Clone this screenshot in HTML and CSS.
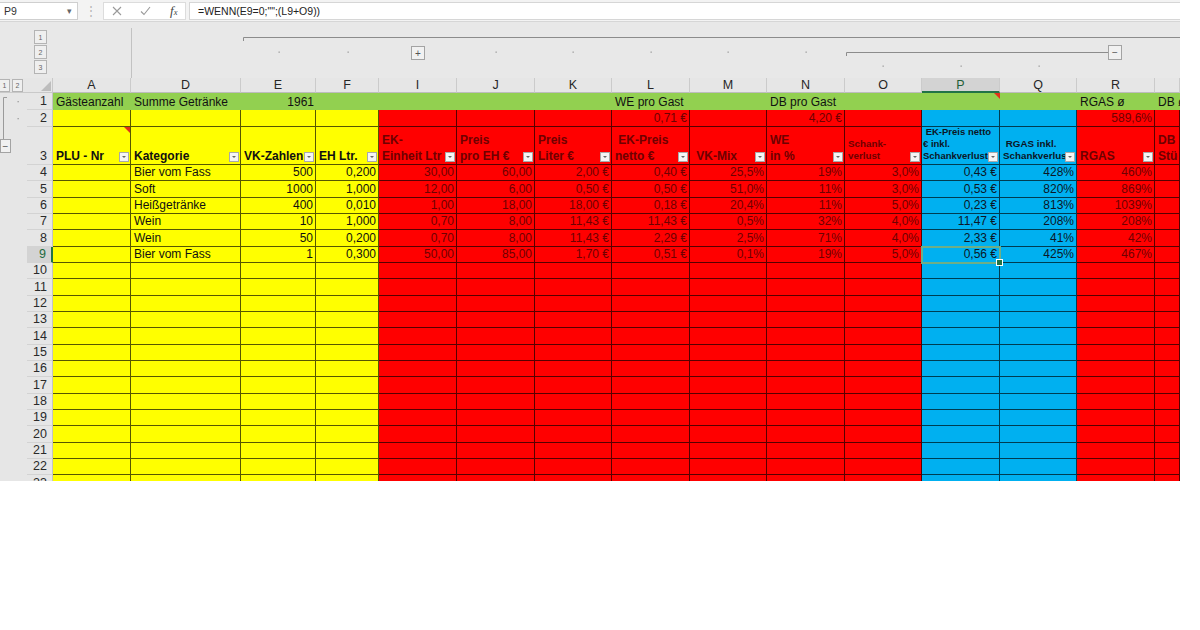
FILE: index.html
```html
<!DOCTYPE html>
<html lang="de">
<head>
<meta charset="utf-8">
<title>Getränkekalkulation</title>
<link rel="stylesheet" href="styles.css">
</head>
<body>
<div class="app">
  <div class="fbar">
    <div class="namebox"><span>P9</span><span class="nb-arrow">▾</span></div>
    <div class="fb-grip">⋮</div>
    <div class="fb-btns">
      <svg class="ic" width="10" height="10" viewBox="0 0 10 10"><path d="M1 1L9 9M9 1L1 9" stroke="#9a9a9a" stroke-width="1.1" fill="none"/></svg>
      <svg class="ic" width="11" height="10" viewBox="0 0 11 10"><path d="M1 5.5L4 8.5L10 1" stroke="#9a9a9a" stroke-width="1.1" fill="none"/></svg>
      <span class="fx"><i>f</i><i class="fx-x">x</i></span>
    </div>
    <div class="fb-input">=WENN(E9=0;"";(L9+O9))</div>
  </div>

  <div class="outline">
    <div class="levels">
      <span class="lvl">1</span><span class="lvl">2</span><span class="lvl">3</span>
    </div>
    <svg class="groups" width="1049" height="56" viewBox="0 0 1049 56">
      <line x1="0.5" y1="6" x2="0.5" y2="56" stroke="#c2c2c2"/>
      <path d="M112.5 19V15.5H1049" fill="none" stroke="#8c8c8c"/>
      <g fill="#9c9c9c">
        <rect x="147.5" y="29.5" width="1.3" height="1.3"/>
        <rect x="216.5" y="29.5" width="1.3" height="1.3"/>
        <rect x="364.5" y="29.5" width="1.3" height="1.3"/>
        <rect x="441.5" y="29.5" width="1.3" height="1.3"/>
        <rect x="519.5" y="29.5" width="1.3" height="1.3"/>
        <rect x="596.5" y="29.5" width="1.3" height="1.3"/>
        <rect x="674.5" y="29.5" width="1.3" height="1.3"/>
        <rect x="751.5" y="43.5" width="1.3" height="1.3"/>
        <rect x="829.5" y="43.5" width="1.3" height="1.3"/>
        <rect x="907.5" y="43.5" width="1.3" height="1.3"/>
      </g>
      <rect x="280.5" y="24.5" width="13" height="13" fill="#f1f1f1" stroke="#a3a3a3"/>
      <text x="287" y="34.5" font-family="Liberation Sans, sans-serif" font-size="10" fill="#555" text-anchor="middle">+</text>
      <path d="M715.5 34V30.5H977" fill="none" stroke="#8c8c8c"/>
      <rect x="977.5" y="23.5" width="13" height="14" fill="#f1f1f1" stroke="#a3a3a3"/>
      <text x="984" y="34" font-family="Liberation Sans, sans-serif" font-size="10" fill="#555" text-anchor="middle">−</text>
    </svg>
  </div>

  <div class="sheet">
    <!-- column headers -->
    <div class="corner">
      <span class="lv">1</span><span class="lv">2</span>
      <svg class="selall" width="10" height="10" viewBox="0 0 10 10"><path d="M10 0V10H0Z" fill="#bdbdbd"/></svg>
    </div>
    <div class="ch">A</div><div class="ch">D</div><div class="ch">E</div><div class="ch">F</div>
    <div class="ch">I</div><div class="ch">J</div><div class="ch">K</div><div class="ch">L</div>
    <div class="ch">M</div><div class="ch">N</div><div class="ch">O</div><div class="ch on">P</div>
    <div class="ch">Q</div><div class="ch">R</div><div class="ch"></div>

    <!-- row outline bracket -->
    <svg class="bracket" width="27" height="72" viewBox="0 0 27 72">
      <path d="M7 4.5H3.5V46" fill="none" stroke="#9a9a9a"/>
      <rect x="0.5" y="46.5" width="10" height="13" fill="#f1f1f1" stroke="#a3a3a3"/>
      <text x="5.5" y="56.5" font-family="Liberation Sans, sans-serif" font-size="10" fill="#555" text-anchor="middle">−</text>
      <rect x="17.5" y="8" width="1.3" height="1.3" fill="#9c9c9c"/>
      <rect x="17.5" y="25" width="1.3" height="1.3" fill="#9c9c9c"/>
    </svg>

    <!-- row 1 -->
    <div class="rh">1</div>
    <div class="c g">Gästeanzahl</div><div class="c g">Summe Getränke</div><div class="c g n">1961</div><div class="c g"></div>
    <div class="c g"></div><div class="c g"></div><div class="c g"></div><div class="c g">WE pro Gast</div>
    <div class="c g"></div><div class="c g">DB pro Gast</div><div class="c g"></div><div class="c g cm"></div>
    <div class="c g"></div><div class="c g">RGAS ø</div><div class="c g clip">DB ø</div>

    <!-- row 2 -->
    <div class="rh">2</div>
    <div class="c y"></div><div class="c y"></div><div class="c y"></div><div class="c y"></div>
    <div class="c r"></div><div class="c r"></div><div class="c r"></div><div class="c r n">0,71 €</div>
    <div class="c r"></div><div class="c r n">4,20 €</div><div class="c r"></div><div class="c b"></div>
    <div class="c b"></div><div class="c r n">589,6%</div><div class="c r"></div>

    <!-- row 3: table headers -->
    <div class="rh">3</div>
    <div class="c y hd cm"><span class="t">PLU - Nr</span><span class="fl"></span></div>
    <div class="c y hd"><span class="t">Kategorie</span><span class="fl"></span></div>
    <div class="c y hd"><span class="t">VK-Zahlen</span><span class="fl"></span></div>
    <div class="c y hd"><span class="t">EH Ltr.</span><span class="fl"></span></div>
    <div class="c r hd"><span class="t">EK-<br>Einheit Ltr</span><span class="fl"></span></div>
    <div class="c r hd"><span class="t">Preis<br>pro EH €</span><span class="fl"></span></div>
    <div class="c r hd"><span class="t">Preis<br>Liter €</span><span class="fl"></span></div>
    <div class="c r hd"><span class="t">&nbsp;EK-Preis<br>netto €</span><span class="fl"></span></div>
    <div class="c r hd"><span class="t">&nbsp;VK-Mix</span><span class="fl"></span></div>
    <div class="c r hd"><span class="t">WE<br>in %</span><span class="fl"></span></div>
    <div class="c r hd sm"><span class="t">Schank-<br>verlust</span><span class="fl"></span></div>
    <div class="c b hd sm xs"><span class="t">&nbsp;EK-Preis netto<br>€ inkl.<br>Schankverlust</span><span class="fl"></span></div>
    <div class="c b hd sm"><span class="t">&nbsp;RGAS inkl.<br>Schankverlust</span><span class="fl"></span></div>
    <div class="c r hd"><span class="t">RGAS</span><span class="fl"></span></div>
    <div class="c r hd"><span class="t">DB<br>Stück</span></div>

    <!-- row 4 -->
    <div class="rh">4</div>
    <div class="c y"></div><div class="c y">Bier vom Fass</div><div class="c y n">500</div><div class="c y n">0,200</div>
    <div class="c r n">30,00</div><div class="c r n">60,00</div><div class="c r n">2,00 €</div><div class="c r n">0,40 €</div>
    <div class="c r n">25,5%</div><div class="c r n">19%</div><div class="c r n">3,0%</div><div class="c b n">0,43 €</div>
    <div class="c b n">428%</div><div class="c r n">460%</div><div class="c r"></div>

    <!-- row 5 -->
    <div class="rh">5</div>
    <div class="c y"></div><div class="c y">Soft</div><div class="c y n">1000</div><div class="c y n">1,000</div>
    <div class="c r n">12,00</div><div class="c r n">6,00</div><div class="c r n">0,50 €</div><div class="c r n">0,50 €</div>
    <div class="c r n">51,0%</div><div class="c r n">11%</div><div class="c r n">3,0%</div><div class="c b n">0,53 €</div>
    <div class="c b n">820%</div><div class="c r n">869%</div><div class="c r"></div>

    <!-- row 6 -->
    <div class="rh">6</div>
    <div class="c y"></div><div class="c y">Heißgetränke</div><div class="c y n">400</div><div class="c y n">0,010</div>
    <div class="c r n">1,00</div><div class="c r n">18,00</div><div class="c r n">18,00 €</div><div class="c r n">0,18 €</div>
    <div class="c r n">20,4%</div><div class="c r n">11%</div><div class="c r n">5,0%</div><div class="c b n">0,23 €</div>
    <div class="c b n">813%</div><div class="c r n">1039%</div><div class="c r"></div>

    <!-- row 7 -->
    <div class="rh">7</div>
    <div class="c y"></div><div class="c y">Wein</div><div class="c y n">10</div><div class="c y n">1,000</div>
    <div class="c r n">0,70</div><div class="c r n">8,00</div><div class="c r n">11,43 €</div><div class="c r n">11,43 €</div>
    <div class="c r n">0,5%</div><div class="c r n">32%</div><div class="c r n">4,0%</div><div class="c b n">11,47 €</div>
    <div class="c b n">208%</div><div class="c r n">208%</div><div class="c r"></div>

    <!-- row 8 -->
    <div class="rh">8</div>
    <div class="c y"></div><div class="c y">Wein</div><div class="c y n">50</div><div class="c y n">0,200</div>
    <div class="c r n">0,70</div><div class="c r n">8,00</div><div class="c r n">11,43 €</div><div class="c r n">2,29 €</div>
    <div class="c r n">2,5%</div><div class="c r n">71%</div><div class="c r n">4,0%</div><div class="c b n">2,33 €</div>
    <div class="c b n">41%</div><div class="c r n">42%</div><div class="c r"></div>

    <!-- row 9 -->
    <div class="rh on">9</div>
    <div class="c y"></div><div class="c y">Bier vom Fass</div><div class="c y n">1</div><div class="c y n">0,300</div>
    <div class="c r n">50,00</div><div class="c r n">85,00</div><div class="c r n">1,70 €</div><div class="c r n">0,51 €</div>
    <div class="c r n">0,1%</div><div class="c r n">19%</div><div class="c r n">5,0%</div><div class="c b n sel">0,56 €</div>
    <div class="c b n">425%</div><div class="c r n">467%</div><div class="c r"></div>

    <!-- empty rows -->
    <div class="rh">10</div><div class="c y"></div><div class="c y"></div><div class="c y"></div><div class="c y"></div><div class="c r"></div><div class="c r"></div><div class="c r"></div><div class="c r"></div><div class="c r"></div><div class="c r"></div><div class="c r"></div><div class="c b"></div><div class="c b"></div><div class="c r"></div><div class="c r"></div>
    <div class="rh">11</div><div class="c y"></div><div class="c y"></div><div class="c y"></div><div class="c y"></div><div class="c r"></div><div class="c r"></div><div class="c r"></div><div class="c r"></div><div class="c r"></div><div class="c r"></div><div class="c r"></div><div class="c b"></div><div class="c b"></div><div class="c r"></div><div class="c r"></div>
    <div class="rh">12</div><div class="c y"></div><div class="c y"></div><div class="c y"></div><div class="c y"></div><div class="c r"></div><div class="c r"></div><div class="c r"></div><div class="c r"></div><div class="c r"></div><div class="c r"></div><div class="c r"></div><div class="c b"></div><div class="c b"></div><div class="c r"></div><div class="c r"></div>
    <div class="rh">13</div><div class="c y"></div><div class="c y"></div><div class="c y"></div><div class="c y"></div><div class="c r"></div><div class="c r"></div><div class="c r"></div><div class="c r"></div><div class="c r"></div><div class="c r"></div><div class="c r"></div><div class="c b"></div><div class="c b"></div><div class="c r"></div><div class="c r"></div>
    <div class="rh">14</div><div class="c y"></div><div class="c y"></div><div class="c y"></div><div class="c y"></div><div class="c r"></div><div class="c r"></div><div class="c r"></div><div class="c r"></div><div class="c r"></div><div class="c r"></div><div class="c r"></div><div class="c b"></div><div class="c b"></div><div class="c r"></div><div class="c r"></div>
    <div class="rh">15</div><div class="c y"></div><div class="c y"></div><div class="c y"></div><div class="c y"></div><div class="c r"></div><div class="c r"></div><div class="c r"></div><div class="c r"></div><div class="c r"></div><div class="c r"></div><div class="c r"></div><div class="c b"></div><div class="c b"></div><div class="c r"></div><div class="c r"></div>
    <div class="rh">16</div><div class="c y"></div><div class="c y"></div><div class="c y"></div><div class="c y"></div><div class="c r"></div><div class="c r"></div><div class="c r"></div><div class="c r"></div><div class="c r"></div><div class="c r"></div><div class="c r"></div><div class="c b"></div><div class="c b"></div><div class="c r"></div><div class="c r"></div>
    <div class="rh">17</div><div class="c y"></div><div class="c y"></div><div class="c y"></div><div class="c y"></div><div class="c r"></div><div class="c r"></div><div class="c r"></div><div class="c r"></div><div class="c r"></div><div class="c r"></div><div class="c r"></div><div class="c b"></div><div class="c b"></div><div class="c r"></div><div class="c r"></div>
    <div class="rh">18</div><div class="c y"></div><div class="c y"></div><div class="c y"></div><div class="c y"></div><div class="c r"></div><div class="c r"></div><div class="c r"></div><div class="c r"></div><div class="c r"></div><div class="c r"></div><div class="c r"></div><div class="c b"></div><div class="c b"></div><div class="c r"></div><div class="c r"></div>
    <div class="rh">19</div><div class="c y"></div><div class="c y"></div><div class="c y"></div><div class="c y"></div><div class="c r"></div><div class="c r"></div><div class="c r"></div><div class="c r"></div><div class="c r"></div><div class="c r"></div><div class="c r"></div><div class="c b"></div><div class="c b"></div><div class="c r"></div><div class="c r"></div>
    <div class="rh">20</div><div class="c y"></div><div class="c y"></div><div class="c y"></div><div class="c y"></div><div class="c r"></div><div class="c r"></div><div class="c r"></div><div class="c r"></div><div class="c r"></div><div class="c r"></div><div class="c r"></div><div class="c b"></div><div class="c b"></div><div class="c r"></div><div class="c r"></div>
    <div class="rh">21</div><div class="c y"></div><div class="c y"></div><div class="c y"></div><div class="c y"></div><div class="c r"></div><div class="c r"></div><div class="c r"></div><div class="c r"></div><div class="c r"></div><div class="c r"></div><div class="c r"></div><div class="c b"></div><div class="c b"></div><div class="c r"></div><div class="c r"></div>
    <div class="rh">22</div><div class="c y"></div><div class="c y"></div><div class="c y"></div><div class="c y"></div><div class="c r"></div><div class="c r"></div><div class="c r"></div><div class="c r"></div><div class="c r"></div><div class="c r"></div><div class="c r"></div><div class="c b"></div><div class="c b"></div><div class="c r"></div><div class="c r"></div>
    <div class="rh">23</div><div class="c y"></div><div class="c y"></div><div class="c y"></div><div class="c y"></div><div class="c r"></div><div class="c r"></div><div class="c r"></div><div class="c r"></div><div class="c r"></div><div class="c r"></div><div class="c r"></div><div class="c b"></div><div class="c b"></div><div class="c r"></div><div class="c r"></div>
  </div>
</div>
</body>
</html>
```

FILE: styles.css
```css
html, body {
  margin: 0;
  padding: 0;
  background: #ffffff;
}

body {
  font-family: "Liberation Sans", Arial, sans-serif;
  font-size: 12px;
  color: #111;
}

.app {
  width: 1180px;
  height: 481px;
  overflow: hidden;
  background: #e6e6e6;
  display: flex;
  flex-direction: column;
}

/* ---------- formula bar ---------- */
.fbar {
  height: 22px;
  flex: none;
  display: flex;
  align-items: center;
  background: #f3f3f3;
  border-bottom: 1px solid #d6d6d6;
  box-sizing: border-box;
}

.namebox {
  width: 78px;
  height: 18px;
  box-sizing: border-box;
  background: #fff;
  border: 1px solid #cfcfcf;
  border-left: none;
  display: flex;
  align-items: center;
  justify-content: space-between;
  padding: 0 5px 0 4px;
  font-size: 10.5px;
  color: #333;
}

.nb-arrow {
  font-size: 9px;
  color: #666;
}

.fb-grip {
  width: 25px;
  text-align: center;
  color: #b5b5b5;
  font-size: 12px;
}

.fb-btns {
  width: 83px;
  height: 18px;
  box-sizing: border-box;
  background: #fff;
  border: 1px solid #dcdcdc;
  display: flex;
  align-items: center;
  padding-left: 8px;
  gap: 18px;
}

.fx {
  font-family: "Liberation Serif", "Times New Roman", serif;
  font-size: 13px;
  color: #444;
  margin-left: 1px;
}

.fx-x {
  font-size: 8.5px;
}

.fb-input {
  flex: 1;
  height: 18px;
  margin-left: 3px;
  box-sizing: border-box;
  background: #fff;
  border: 1px solid #d6d6d6;
  border-right: none;
  padding-left: 8px;
  display: flex;
  align-items: center;
  font-size: 10.5px;
  color: #222;
}

/* ---------- outline area ---------- */
.outline {
  height: 56px;
  flex: none;
  display: flex;
  background: #e8e8e8;
}

.levels {
  width: 131px;
  flex: none;
  display: flex;
  flex-direction: column;
  gap: 1px;
  padding: 8px 0 0 34px;
  box-sizing: border-box;
}

.lvl {
  width: 13px;
  height: 14px;
  box-sizing: border-box;
  border: 1px solid #b4b4b4;
  background: #efefef;
  font-size: 7px;
  color: #666;
  display: flex;
  align-items: center;
  justify-content: center;
}

.groups {
  display: block;
}

/* ---------- sheet grid ---------- */
.sheet {
  flex: none;
  height: 403px;
  overflow: hidden;
  display: grid;
  grid-template-columns: 27px 26px 78px 110px 75px 63px 78px 78px 77px 78px 77px 78px 77px 78px 77px 78px 25px;
  grid-template-rows: 15px 17px 17px 38px repeat(20, 16.33px);
  background: #e6e6e6;
}

.corner {
  grid-column: 1 / 3;
  display: flex;
  align-items: center;
  gap: 2px;
  border-bottom: 1px solid #c9c9c9;
  border-right: 1px solid #c9c9c9;
  box-sizing: border-box;
}

.lv {
  width: 11px;
  height: 13px;
  box-sizing: border-box;
  border: 1px solid #b4b4b4;
  background: #efefef;
  font-size: 7px;
  color: #666;
  display: flex;
  align-items: center;
  justify-content: center;
}

.lv:first-child {
  border-left: none;
  width: 10px;
}

.selall {
  margin-left: auto;
  margin-right: 1px;
  align-self: flex-end;
  margin-bottom: 1px;
}

.ch {
  display: flex;
  align-items: center;
  justify-content: center;
  border-right: 1px solid #cbcbcb;
  border-bottom: 1px solid #bdbdbd;
  font-size: 12.5px;
  color: #262626;
  box-sizing: border-box;
}

.ch.on {
  background: #d3d3d3;
  color: #1e5e36;
  border-bottom: 2px solid #217346;
}

.bracket {
  grid-column: 1;
  grid-row: 2 / 5;
  display: block;
}

.rh {
  grid-column: 2;
  display: flex;
  align-items: flex-end;
  justify-content: flex-end;
  padding-right: 5px;
  line-height: 15px;
  font-size: 12.5px;
  color: #2a2a2a;
  border-bottom: 1px solid #d3d3d3;
  border-right: 1px solid #c3c3c3;
  box-sizing: border-box;
}

.rh.on {
  background: #d3d3d3;
  color: #1e6b3e;
  border-right: 2px solid #217346;
}

/* cells */
.c {
  --ln: rgba(0, 0, 0, 0.66);
  position: relative;
  display: flex;
  align-items: flex-end;
  padding: 0 2px 0 3px;
  min-width: 0;
  box-sizing: border-box;
  border-right: 1px solid var(--ln);
  border-bottom: 1px solid var(--ln);
  white-space: nowrap;
  overflow: hidden;
  line-height: 15px;
  font-size: 12px;
}

.n {
  justify-content: flex-end;
}

.y {
  background: #ffff00;
  color: #111;
}

.r {
  background: #ff0000;
  color: #6e0000;
}

.b {
  background: #00b0f0;
  color: #0c1626;
}

.g {
  background: #92d050;
  color: #111;
  border: none;
  overflow: visible;
  line-height: 16px;
}

.g.clip {
  overflow: hidden;
}

/* header row cells */
.hd {
  font-weight: bold;
  font-size: 12px;
  line-height: 16px;
  padding-right: 1px;
}

.hd .t {
  flex: 1;
  min-width: 0;
  overflow: hidden;
  white-space: nowrap;
}

.hd.sm {
  font-size: 9.8px;
  line-height: 12px;
  padding-bottom: 2px;
}

.hd.sm .t {
  margin-right: -11px;
}

.hd.xs {
  font-size: 9.5px;
  padding-left: 1px;
}

.hd.sm .fl {
  margin-bottom: 0;
}

.fl {
  flex: none;
  width: 10px;
  height: 10px;
  margin: 0 0 2px 1px;
  box-sizing: border-box;
  background: #f5f5f5;
  border: 1px solid #a9a9a9;
  position: relative;
  z-index: 1;
}

.fl::after {
  content: "";
  position: absolute;
  left: 2px;
  top: 3px;
  border-left: 2px solid transparent;
  border-right: 2px solid transparent;
  border-top: 2px solid #666;
}

/* comment marker */
.cm::before {
  content: "";
  position: absolute;
  top: 0;
  right: 0;
  border-left: 6px solid transparent;
  border-top: 6px solid #e1301c;
}

/* active cell */
.sel {
  overflow: visible;
  outline: 2px solid #6fae86;
  outline-offset: -1px;
  z-index: 2;
}

.sel::after {
  content: "";
  position: absolute;
  right: -4px;
  bottom: -4px;
  width: 5px;
  height: 5px;
  background: #217346;
  border: 1px solid #fff;
}
```
